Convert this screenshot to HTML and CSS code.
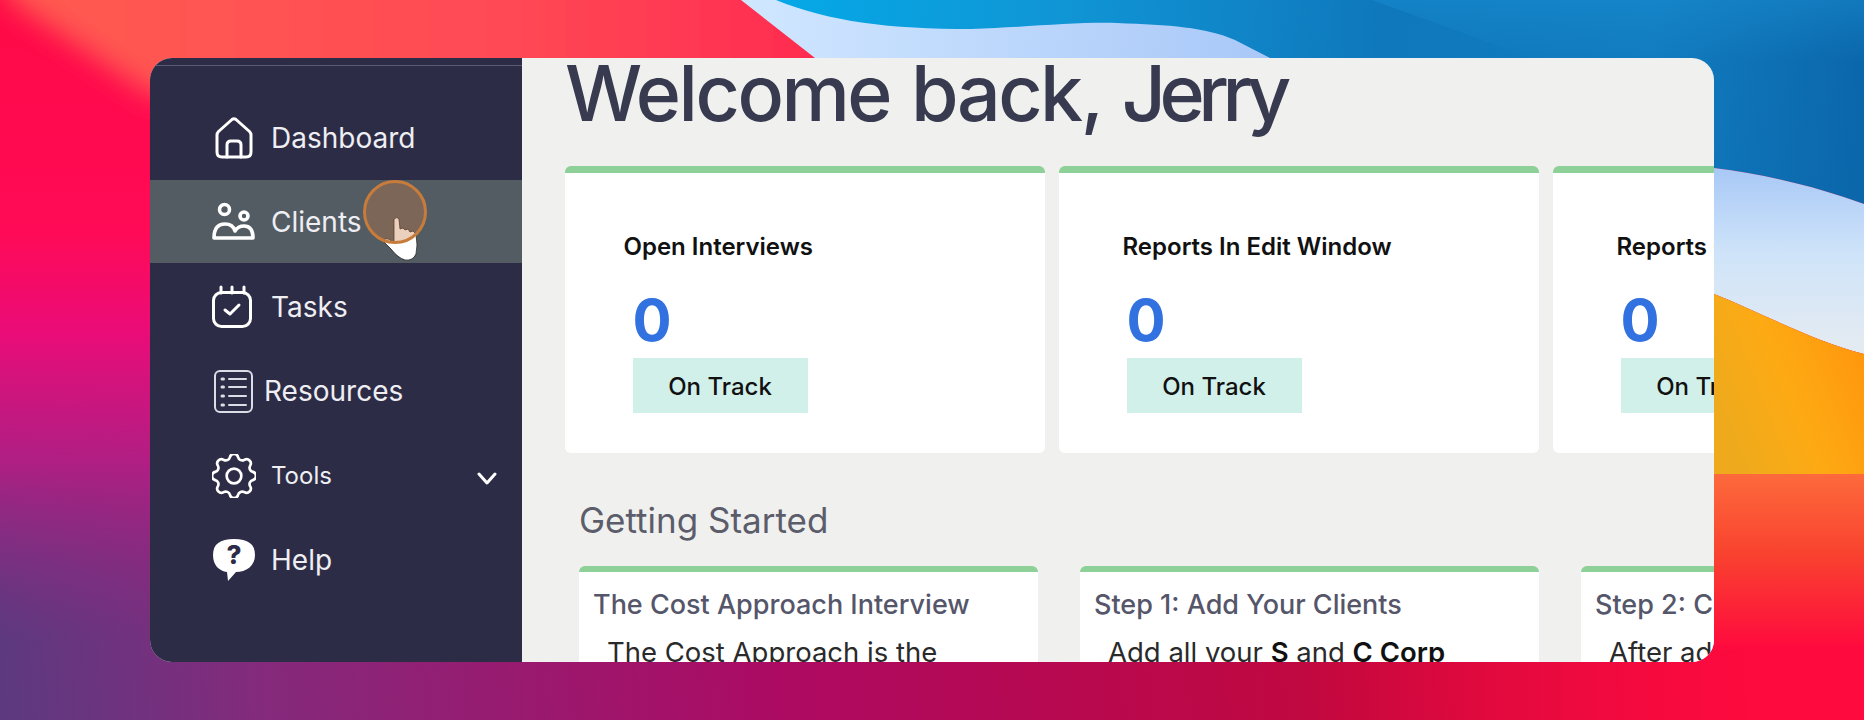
FILE: index.html
```html
<!DOCTYPE html>
<html lang="en">
<head>
  <meta charset="UTF-8">
  <title>Welcome back, Jerry</title>
  <meta name="viewport" content="width=device-width, initial-scale=1.0">
  <link rel="stylesheet" href="styles.css">
</head>
<body>
<!-- desktop wallpaper -->
<svg class="wallpaper" viewBox="0 0 1864 720" preserveAspectRatio="none" aria-hidden="true">
  <defs>
    <linearGradient id="wpBase" gradientUnits="userSpaceOnUse" x1="0" y1="720" x2="1864" y2="560">
      <stop offset="0" stop-color="#5c3a80"/>
      <stop offset="0.14" stop-color="#842a7c"/>
      <stop offset="0.42" stop-color="#ad0a62"/>
      <stop offset="0.72" stop-color="#c2083e"/>
      <stop offset="1" stop-color="#f00a3e"/>
    </linearGradient>
    <linearGradient id="wpRed" x1="0" y1="0" x2="0" y2="1">
      <stop offset="0" stop-color="#ff0a46"/>
      <stop offset="0.36" stop-color="#ff0a56"/>
      <stop offset="0.52" stop-color="#ea0c78"/>
      <stop offset="0.72" stop-color="#b81c84" stop-opacity="0.9"/>
      <stop offset="1" stop-color="#8a2a80" stop-opacity="0"/>
    </linearGradient>
    <linearGradient id="wpCoral" x1="0" y1="0" x2="1" y2="0">
      <stop offset="0" stop-color="#ff5c50"/>
      <stop offset="0.6" stop-color="#ff4a54"/>
      <stop offset="1" stop-color="#ff2a50"/>
    </linearGradient>
    <linearGradient id="wpBlue" gradientUnits="userSpaceOnUse" x1="780" y1="0" x2="1864" y2="120">
      <stop offset="0" stop-color="#05a8e6"/>
      <stop offset="0.25" stop-color="#1096d6"/>
      <stop offset="0.55" stop-color="#0f78bc"/>
      <stop offset="0.8" stop-color="#127cc0"/>
      <stop offset="1" stop-color="#0b66aa"/>
    </linearGradient>
    <linearGradient id="wpIce" gradientUnits="userSpaceOnUse" x1="760" y1="0" x2="1270" y2="60">
      <stop offset="0" stop-color="#cfe6ff"/>
      <stop offset="1" stop-color="#a9c8f8"/>
    </linearGradient>
    <linearGradient id="wpStreak" x1="0" y1="0" x2="0" y2="1">
      <stop offset="0" stop-color="#1a8ed2" stop-opacity="0.45"/>
      <stop offset="1" stop-color="#1a8ed2" stop-opacity="0"/>
    </linearGradient>
    <linearGradient id="wpSky" gradientUnits="userSpaceOnUse" x1="1780" y1="170" x2="1780" y2="340">
      <stop offset="0" stop-color="#a9c9f6"/>
      <stop offset="0.5" stop-color="#cfe4f9"/>
      <stop offset="1" stop-color="#e2eaf2"/>
    </linearGradient>
    <linearGradient id="wpOrange" gradientUnits="userSpaceOnUse" x1="1714" y1="400" x2="1864" y2="340">
      <stop offset="0" stop-color="#eeaa1c"/>
      <stop offset="0.45" stop-color="#fdaa14"/>
      <stop offset="1" stop-color="#ff960c"/>
    </linearGradient>
    <linearGradient id="wpSunset" x1="0" y1="0" x2="0" y2="1">
      <stop offset="0" stop-color="#fd6a3c"/>
      <stop offset="0.45" stop-color="#f9432f"/>
      <stop offset="1" stop-color="#ff0a3e"/>
    </linearGradient>
    <linearGradient id="wpFloor" gradientUnits="userSpaceOnUse" x1="1300" y1="0" x2="1790" y2="0">
      <stop offset="0" stop-color="#ff0a3e" stop-opacity="0"/>
      <stop offset="1" stop-color="#ff0a3e"/>
    </linearGradient>
    <filter id="wpSoft" x="-20%" y="-20%" width="140%" height="140%"><feGaussianBlur stdDeviation="14"/></filter>
  </defs>
  <rect width="1864" height="720" fill="url(#wpBase)"/>
  <rect width="900" height="640" fill="url(#wpRed)"/>
  <path d="M0 -40 H830 V220 L150 95 L10 0 Z" fill="url(#wpCoral)" filter="url(#wpSoft)"/>
  <path d="M741 0 L815 58 L830 110 L1320 110 V0 Z" fill="url(#wpIce)"/>
  <path d="M776 0 C830 22 890 29 971 29 C1030 27 1075 22 1117 23 C1170 25 1205 27 1235 40 L1270 58 L1300 90 L1500 200 L1714 168 C1770 175 1820 188 1864 204 V0 Z" fill="url(#wpBlue)"/>
  <path d="M1372 0 L1532 58 L1864 60 V0 Z" fill="url(#wpStreak)"/>
  <path d="M1600 150 L1714 168 C1770 175 1820 188 1864 204 V354 C1810 340 1760 312 1714 294 L1600 260 Z" fill="url(#wpSky)"/>
  <path d="M1600 260 L1714 294 C1760 312 1810 340 1864 354 V476 L1600 476 Z" fill="url(#wpOrange)"/>
  <rect x="1600" y="474" width="264" height="175" fill="url(#wpSunset)"/>
  <rect x="1300" y="645" width="564" height="75" fill="url(#wpFloor)"/>
</svg>

<div class="window">
  <nav class="sidebar">
    <a class="nav-item">
      <svg class="nav-icon" width="44" height="44" viewBox="-3 -1 44 44"><path d="M2 18Q2 16 3.500 14.500L17 2.500Q19 1 21 2.500L34.500 14.500Q36 16 36 18V35Q36 40 31 40H7Q2 40 2 35Z"/><path d="M12 40V28Q12 24 16 24H22Q26 24 26 28V40"/></svg>
      <span class="nav-text">Dashboard</span>
    </a>
    <a class="nav-item is-hover">
      <svg class="nav-icon nav-icon-bold" width="44" height="44" viewBox="0 -3 44 44"><circle cx="12.500" cy="6.500" r="5"/><circle cx="32" cy="13" r="4"/><path d="M2 35Q2 21 13 21Q21 21 23 28Q26 23 32 23Q41 23 41 35Z"/></svg>
      <span class="nav-text">Clients</span>
    </a>
    <a class="nav-item">
      <svg class="nav-icon" width="44" height="44" viewBox="0 -1 44 44"><rect x="1.500" y="6.500" width="37" height="34" rx="8"/><path d="M9 1V7M20 1V7M32 1V7"/><path d="M13 24L18 28L27 19"/></svg>
      <span class="nav-text">Tasks</span>
    </a>
    <a class="nav-item">
      <svg class="nav-icon nav-icon-thin" width="44" height="44" viewBox="-2 -1 44 44"><rect x="1" y="1" width="37" height="41" rx="5"/><path d="M15 9H32M15 17H32M15 26H32M15 35H32"/><path class="dots" d="M8 9H9.500M8 17H9.500M8 26H9.500M8 35H9.500"/></svg>
      <span class="nav-text nav-text-tight">Resources</span>
    </a>
    <a class="nav-item">
      <svg class="nav-icon nav-icon-gear" width="44" height="44" viewBox="3 3 18 18"><path d="M10.325 4.317c.426-1.756 2.924-1.756 3.35 0a1.724 1.724 0 002.573 1.066c1.543-.94 3.31.826 2.37 2.37a1.724 1.724 0 001.065 2.572c1.756.426 1.756 2.924 0 3.35a1.724 1.724 0 00-1.066 2.573c.94 1.543-.826 3.31-2.37 2.37a1.724 1.724 0 00-2.572 1.065c-.426 1.756-2.924 1.756-3.35 0a1.724 1.724 0 00-2.573-1.066c-1.543.94-3.31-.826-2.37-2.37a1.724 1.724 0 00-1.065-2.572c-1.756-.426-1.756-2.924 0-3.35a1.724 1.724 0 001.066-2.573c-.94-1.543.826-3.31 2.37-2.37.996.608 2.296.07 2.572-1.065z"/><circle cx="12" cy="12" r="3"/></svg>
      <span class="nav-text nav-text-small">Tools</span>
      <svg class="nav-chevron" width="20" height="14" viewBox="0 0 20 14"><path d="M2 2L10 11L18 2"/></svg>
    </a>
    <a class="nav-item">
      <svg class="nav-icon nav-icon-solid" width="44" height="44" viewBox="0 0 44 44"><path d="M22 1C36 1 43 6 43 17C43 28 34 34 24 34L16 43L15 34C7 33 1 27 1 17C1 6 8 1 22 1Z"/><text class="help-mark" x="22" y="26" text-anchor="middle">?</text></svg>
      <span class="nav-text">Help</span>
    </a>
  </nav>

  <main class="content">
    <h1 class="welcome">Welcome back, <span class="welcome-name">Jerry</span></h1>

    <section class="stats">
      <div class="stat-card">
        <div class="stat-label">Open Interviews</div>
        <div class="stat-value">0</div>
        <div class="stat-badge">On Track</div>
      </div>
      <div class="stat-card">
        <div class="stat-label">Reports In Edit Window</div>
        <div class="stat-value">0</div>
        <div class="stat-badge">On Track</div>
      </div>
      <div class="stat-card">
        <div class="stat-label">Reports Completed</div>
        <div class="stat-value">0</div>
        <div class="stat-badge">On Track</div>
      </div>
    </section>

    <h2 class="section-title">Getting Started</h2>

    <section class="steps">
      <div class="step-card">
        <div class="step-title">The Cost Approach Interview</div>
        <div class="step-text">The Cost Approach is the</div>
      </div>
      <div class="step-card">
        <div class="step-title">Step 1: Add Your Clients</div>
        <div class="step-text">Add all your <b>S</b> and <b>C Corp</b></div>
      </div>
      <div class="step-card">
        <div class="step-title">Step 2: Create a Report</div>
        <div class="step-text">After adding your clients</div>
      </div>
    </section>
  </main>

  <!-- screen recording pointer -->
  <div class="pointer">
    <svg class="pointer-hand" width="38" height="48" viewBox="0 0 38 48"><path d="M11 3Q14 0 16 3L17 13L20 12L22 14L25 13L27 16L30 15L33 18Q35 30 33 38Q30 45 22 44Q15 42 8 33L0 25Q3 21 7 24L11 27Z"/></svg>
    <div class="pointer-ring"></div>
  </div>
</div>
</body>
</html>
```

FILE: styles.css
```css
* {
  box-sizing: border-box;
}
body {
  margin: 0;
  height: 720px;
  padding: 58px 150px;
  overflow: hidden;
  font-family: Inter, 'Liberation Sans', sans-serif;
}
.wallpaper {
  position: absolute;
  top: 0;
  left: 0;
  width: 1864px;
  height: 720px;
}
.window {
  position: relative;
  display: flex;
  width: 1564px;
  height: 604px;
  border-radius: 22px;
  overflow: hidden;
  background: #f0f0ee;
}

/* sidebar */
.sidebar {
  flex: none;
  width: 372px;
  padding-top: 37.5px;
  background: #2d2c46 linear-gradient(#5b5b75, #5b5b75) no-repeat 0 7px / 100% 1px;
}
.nav-item {
  display: flex;
  align-items: center;
  height: 84.5px;
  padding-left: 62px;
  color: #eeeef3;
}
.nav-item.is-hover {
  height: 83px;
  margin-bottom: 1.5px;
  background: #535c63;
}
.nav-icon {
  flex: none;
  margin-right: 15px;
  fill: none;
  stroke: #fff;
  stroke-width: 3;
  stroke-linejoin: round;
  stroke-linecap: round;
}
.nav-icon-bold {
  stroke-width: 3.6;
}
.nav-icon-thin {
  stroke: #dcdce6;
  stroke-width: 2;
}
.nav-icon-thin .dots {
  stroke-width: 3;
}
.nav-icon-gear {
  stroke-width: 1.1;
}
.nav-icon-solid {
  fill: #fff;
  stroke: none;
}
.help-mark {
  fill: #2d2c46;
  font-size: 26px;
  font-weight: 800;
}
.nav-text {
  font-size: 28px;
}
.nav-text-tight {
  margin-left: -7px;
}
.nav-text-small {
  font-size: 24px;
}
.nav-chevron {
  margin-left: auto;
  margin-right: 25px;
  margin-top: 6px;
  fill: none;
  stroke: #fff;
  stroke-width: 3;
  stroke-linecap: round;
  stroke-linejoin: round;
}

/* main column */
.content {
  flex: 1;
  min-width: 0;
  padding-left: 43px;
  overflow: hidden;
}
.welcome {
  margin: 0 0 38px;
  font-size: 77px;
  line-height: 70px;
  font-weight: 500;
  letter-spacing: -2.5px;
  word-spacing: 3px;
  color: #383a50;
  white-space: nowrap;
}
.welcome-name {
  letter-spacing: -6.5px;
}
.stats {
  display: flex;
  gap: 14px;
}
.stat-card {
  flex: none;
  width: 480px;
  height: 287px;
  padding: 60px 0 0 67.5px;
  border-top: 7px solid #8dd098;
  border-radius: 6px;
  background: #fff;
  white-space: nowrap;
}
.stat-label {
  margin-left: -4px;
  font-size: 24px;
  line-height: 28px;
  font-weight: 600;
  color: #111;
}
.stat-card:first-child .stat-label {
  margin-left: -9px;
}
.stat-value {
  margin: 31px 0 10px;
  font-size: 58px;
  line-height: 56px;
  font-weight: 700;
  color: #3272e0;
}
.stat-badge {
  width: 175px;
  height: 55px;
  background: #d1f0ea;
  font-size: 24px;
  font-weight: 500;
  line-height: 58px;
  text-align: center;
  color: #111;
}
.section-title {
  margin: 47px 0 26px 14px;
  font-size: 35px;
  line-height: 40px;
  font-weight: 400;
  color: #5c5d6b;
}
.steps {
  display: flex;
  gap: 42px;
  margin-left: 14px;
}
.step-card {
  flex: none;
  width: 459px;
  height: 200px;
  padding: 18px 0 0 14px;
  border-top: 6px solid #8dd098;
  border-radius: 6px;
  background: #fff;
  white-space: nowrap;
}
.step-title {
  margin-bottom: 17px;
  font-size: 27px;
  line-height: 30px;
  font-weight: 500;
  color: #55566a;
}
.step-text {
  margin-left: 14px;
  font-size: 27.5px;
  line-height: 30px;
  color: #2a2a2a;
}
.step-text b {
  font-weight: 600;
  color: #111;
}

/* pointer over the hovered row */
.pointer {
  position: absolute;
  left: 213px;
  top: 122px;
  width: 64px;
  height: 84px;
}
.pointer-hand {
  position: absolute;
  left: 20px;
  top: 36px;
  fill: #fff;
  stroke: #222;
  stroke-width: 0.8;
}
.pointer-ring {
  position: absolute;
  top: 0;
  left: 0;
  width: 64px;
  height: 64px;
  border: 3px solid #c87c3c;
  border-radius: 50%;
  background: rgba(200, 120, 70, 0.35);
}
```
